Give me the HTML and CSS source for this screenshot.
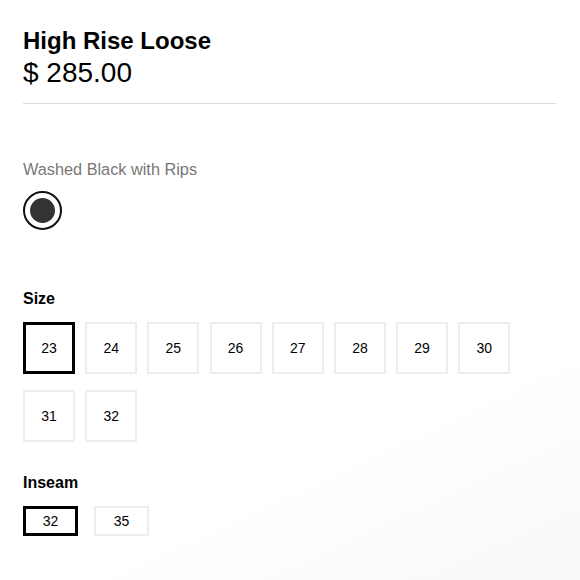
FILE: index.html
```html
<!DOCTYPE html>
<html>
<head>
<meta charset="utf-8">
<link rel="stylesheet" href="styles.css">
</head>
<body>
<main class="product">
  <header class="head">
    <h1 class="title">High Rise Loose</h1>
    <div class="price">$ 285.00</div>
  </header>
  <section class="color">
    <div class="color-name">Washed Black with Rips</div>
    <div class="swatch"><span class="swatch-dot"></span></div>
  </section>
  <section class="opt">
    <div class="opt-label">Size</div>
    <div class="sizes">
      <div class="box selected">23</div>
      <div class="box">24</div>
      <div class="box">25</div>
      <div class="box">26</div>
      <div class="box">27</div>
      <div class="box">28</div>
      <div class="box">29</div>
      <div class="box">30</div>
      <div class="box">31</div>
      <div class="box">32</div>
    </div>
  </section>
  <section class="opt inseam">
    <div class="opt-label">Inseam</div>
    <div class="inseams">
      <div class="ibox selected">32</div>
      <div class="ibox">35</div>
    </div>
  </section>
</main>
</body>
</html>
```
FILE: styles.css
```css
html, body {
  margin: 0;
  padding: 0;
  background: #fff;
}
body {
  width: 580px;
  height: 580px;
  overflow: hidden;
  font-family: "Liberation Sans", Arial, sans-serif;
  color: #000;
  background: linear-gradient(155deg, #ffffff 72%, #f8f8f7 100%);
}
.product {
  padding: 27px 24px 0 23px;
}
.head {
  border-bottom: 1px solid #dcdcdc;
  padding-bottom: 14px;
}
.title {
  margin: 0;
  font-size: 24px;
  font-weight: 700;
  line-height: 28px;
}
.price {
  font-size: 28px;
  line-height: 32px;
  margin-top: 2px;
}
.color {
  margin-top: 55px;
}
.color-name {
  font-size: 16.3px;
  color: #777;
  line-height: 20px;
}
.swatch {
  margin-top: 12px;
  width: 35px;
  height: 35px;
  border: 2px solid #111;
  border-radius: 50%;
  display: flex;
  align-items: center;
  justify-content: center;
}
.swatch-dot {
  width: 25px;
  height: 25px;
  border-radius: 50%;
  background: #333;
}
.opt {
  margin-top: 59px;
}
.opt-label {
  font-size: 16px;
  font-weight: 700;
  line-height: 20px;
}
.sizes {
  margin-top: 13px;
  display: flex;
  flex-wrap: wrap;
  column-gap: 10.2px;
  row-gap: 16px;
  width: 500px;
}
.box {
  box-sizing: border-box;
  width: 52px;
  height: 52px;
  border: 2px solid #efece9;
  display: flex;
  align-items: center;
  justify-content: center;
  font-size: 14px;
}
.box.selected, .ibox.selected {
  border: 3px solid #000;
}
.inseam {
  margin-top: 31px;
}
.inseams {
  margin-top: 13px;
  display: flex;
  gap: 16px;
}
.ibox {
  box-sizing: border-box;
  width: 55px;
  height: 30px;
  border: 2px solid #efece9;
  display: flex;
  align-items: center;
  justify-content: center;
  font-size: 14px;
}
```
